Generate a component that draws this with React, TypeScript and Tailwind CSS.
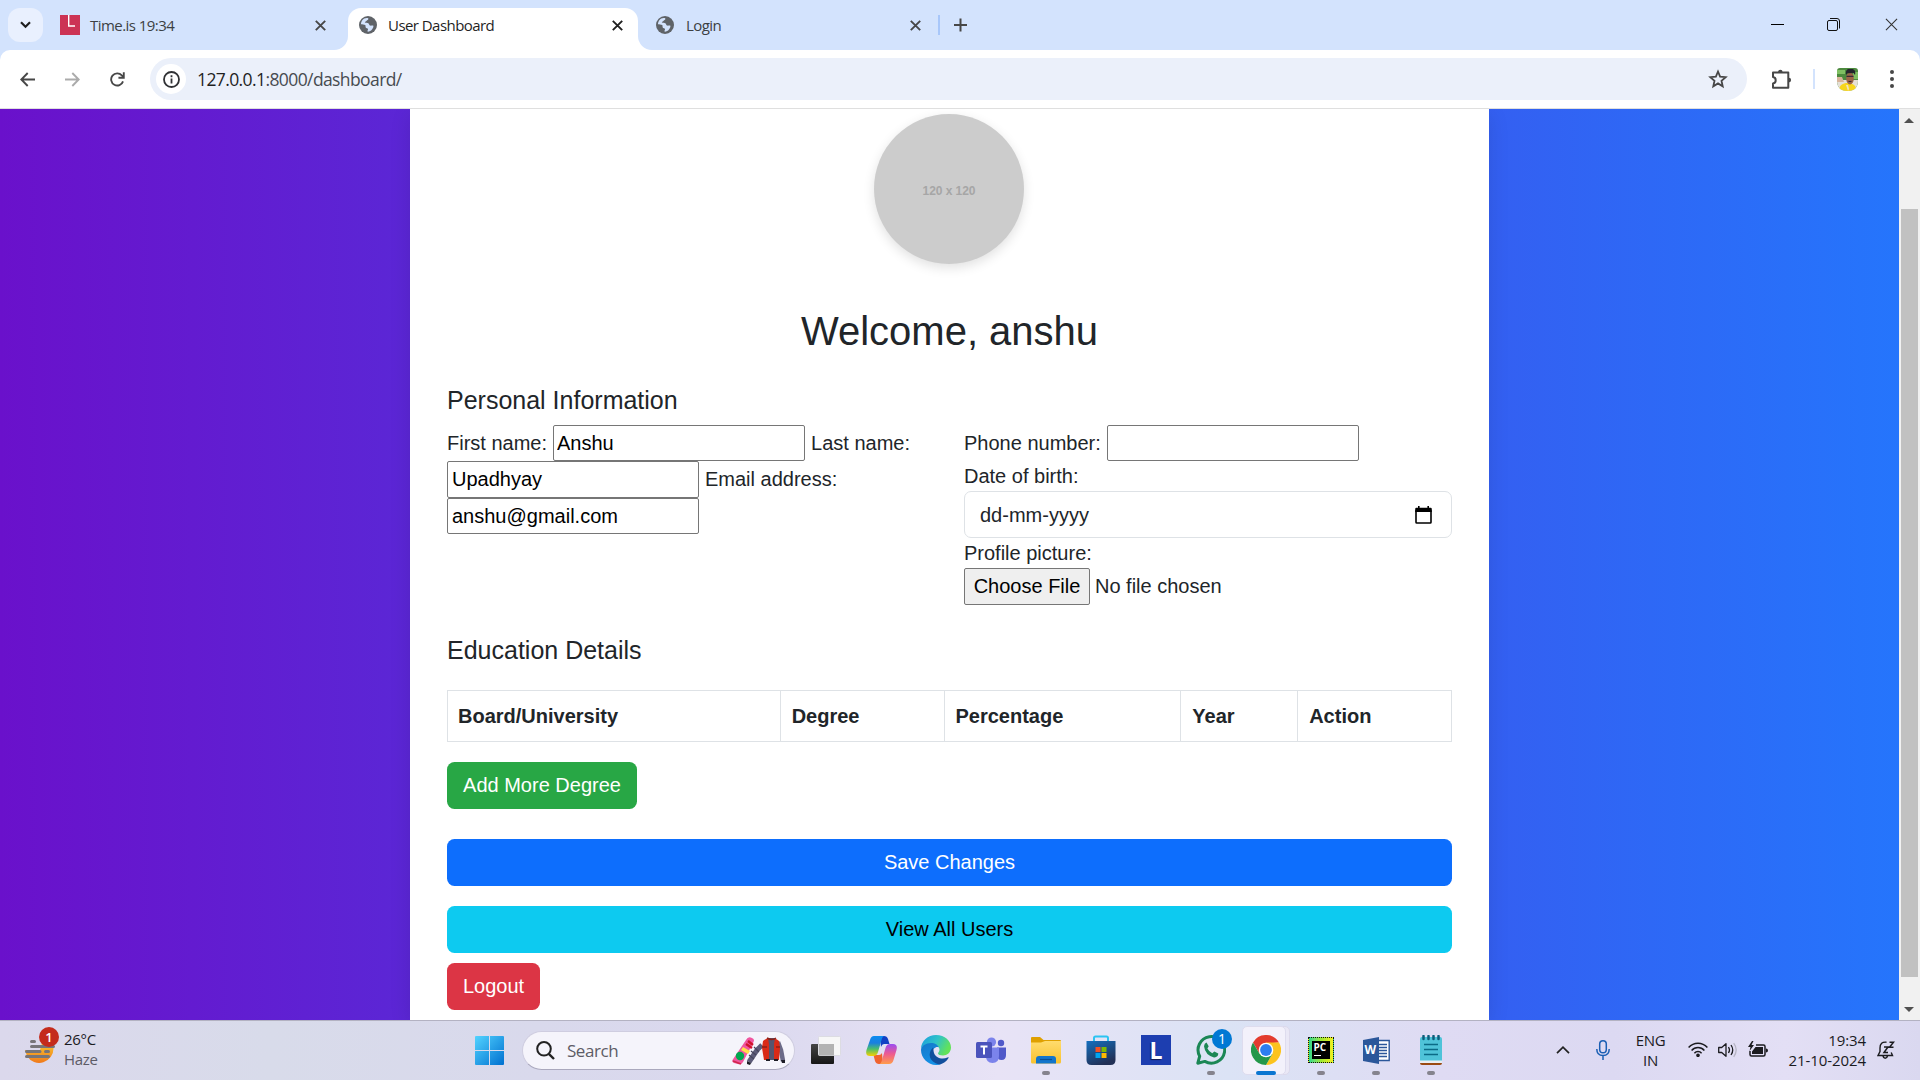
import React from "react";

const ui = "font-['Open_Sans','Noto_Sans',sans-serif]";

function Globe() {
  return (
    <svg width="18" height="18" viewBox="0 0 18 18">
      <circle cx="9" cy="9" r="9" fill="#5f6368" />
      <path
        d="M5.2 2.6C6.4 2 8 1.9 9.2 2.2c.6.9-.2 1.7-1.4 2.2-.3 1-1.600 1-2 1.900C6.500 7.200 8.500 6.600 9.600 7.400c.8.6.5 1.800 1.500 2.200 1.200.3 2.300-.4 3.300.2.2 1.400-.7 3.300-2.300 4.700-1.100.8-2.500 1.300-3.600 1.100-.2-1 .6-1.600.5-2.600-.3-1-1.800-.7-2.300-1.600-.4-1 .1-1.700-.5-2.300C5 8.300 3.300 8.700 1.900 8.300 2 5.800 3.400 3.600 5.200 2.600Z"
        fill="#d3e3fd"
      />
    </svg>
  );
}

function Cross({ color = "#474747", size = 11, w = 1.9 }: { color?: string; size?: number; w?: number }) {
  return (
    <svg width={size} height={size} viewBox="0 0 11 11" stroke={color} strokeWidth={w}>
      <path d="M.8.8l9.400 9.400M10.200.8L.8 10.200" fill="none" />
    </svg>
  );
}

function TabStrip() {
  return (
    <div className={`flex h-[50px] bg-[#d3e3fd] text-[15px] leading-[34px] tracking-[-0.550px] text-[#3c3f43] ${ui}`}>
      <div className="flex w-[348px] pl-2">
        <div className="mt-2 flex h-[34px] w-[35px] items-center justify-center rounded-[12px] bg-[#e9f0fe]">
          <svg width="11" height="8" viewBox="0 0 11 8" fill="none" stroke="#1f1f1f" strokeWidth="2.200">
            <path d="M1 1.300l4.500 4.500L10 1.300" />
          </svg>
        </div>
        <div className="mt-[15px] ml-[17px] h-5 w-5 bg-[#cc3355]">
          <svg width="20" height="20" fill="none" stroke="#fff" strokeWidth="1.400">
            <path d="M8.700 0v11H15" />
          </svg>
        </div>
        <span className="mt-[8px] ml-[10px] w-[225px]">Time.is 19:34</span>
        <div className="mt-[20px]">
          <Cross />
        </div>
        <div className="mt-auto ml-auto h-[14px] w-[15px] shrink-0 bg-white">
          <div className="h-full w-full rounded-br-[14px] bg-[#d3e3fd]" />
        </div>
      </div>
      <div className="mt-2 flex h-[42px] w-[290px] rounded-t-[13px] bg-white pl-[11px] text-[#1f1f1f]">
        <div className="mt-2">
          <Globe />
        </div>
        <span className="ml-[11px] w-[224px]">User Dashboard</span>
        <div className="mt-[12px]">
          <Cross color="#1f1f1f" />
        </div>
      </div>
      <div className="flex w-[300px]">
        <div className="mt-auto h-[14px] w-[14px] bg-white">
          <div className="h-full w-full rounded-bl-[14px] bg-[#d3e3fd]" />
        </div>
        <div className="mt-4 ml-[4px]">
          <Globe />
        </div>
        <span className="mt-2 ml-[12px] w-[224px]">Login</span>
        <div className="mt-[20px]">
          <Cross />
        </div>
      </div>
      <div className="mt-[15px] h-5 w-[2px] bg-[#a8c7fa]" />
      <svg className="mt-[18px] ml-[14px]" width="13" height="14" stroke="#474747" strokeWidth="2">
        <path d="M6.500 .5v13M0 7h13" />
      </svg>
      <div className="mr-[22px] ml-auto flex pt-[18px]">
        <svg width="14" height="14" stroke="#000" strokeWidth="1">
          <path d="M0 6.500h13" />
        </svg>
        <svg className="ml-[42px]" width="14" height="14" fill="none" stroke="#111" strokeWidth="1">
          <rect x=".5" y="2.500" width="10" height="10" rx="1.500" />
          <path d="M3 .5h7q2.500 0 2.500 2.500v7.500" />
        </svg>
        <div className="ml-[44px]">
          <Cross color="#333" size={13} w={0.9} />
        </div>
      </div>
    </div>
  );
}

function Toolbar() {
  return (
    <div className="bg-[#d3e3fd]">
      <div className="flex h-[59px] items-center rounded-t-[10px] border-b border-[#dfdfdf] bg-white">
        <svg className="ml-[20px]" width="15" height="15" viewBox="0 0 15 15" fill="none" stroke="#474747" strokeWidth="1.900">
          <path d="M15 7.500H1.500M7.700 1L1.300 7.500l6.400 6.500" />
        </svg>
        <svg className="ml-[30px]" width="15" height="15" viewBox="0 0 15 15" fill="none" stroke="#ababab" strokeWidth="1.900">
          <path d="M0 7.500h13.500M7.300 1l6.400 6.500L7.300 14" />
        </svg>
        <svg className="ml-[30px]" width="15" height="15" viewBox="0 0 16 16" fill="none" stroke="#474747" strokeWidth="2">
          <path d="M13.900 10A6.500 6.500 0 1 1 12.600 3.600L15 5.800M14.700 .3v5.800H9" />
        </svg>
        <div className="ml-[25px] flex h-[42px] w-[1597px] items-center rounded-full bg-[#ebf0fa]">
          <div className="ml-[6px] flex h-[30px] w-[30px] items-center justify-center rounded-full bg-white">
            <svg width="17" height="17" fill="none" stroke="#303134" strokeWidth="1.800">
              <circle cx="8.500" cy="8.500" r="7.500" />
              <path d="M8.500 7.500v5M8.500 4.300v1.900" />
            </svg>
          </div>
          <span className={`ml-[11px] text-[17.500px] tracking-[-0.600px] text-[#474b50] ${ui}`}>
            <span className="text-[#1f1f1f]">127.0.0.1</span>:8000/dashboard/
          </span>
          <svg className="mr-[19px] ml-auto" width="20" height="20" viewBox="0 0 20 20" fill="none" stroke="#474747" strokeWidth="1.800">
            <path d="M10 2.500l2.100 5.100 5.600.5-4.200 3.700 1.200 5.500L10 14.400l-4.700 2.900 1.200-5.500L2.300 8.100l5.600-.5z" />
          </svg>
        </div>
        <svg className="ml-[24px]" width="21" height="21" viewBox="0 0 21 21">
          <path
            d="M2 3.500h15.300v15.300H2v-4.300c3.600-.4 3.600-6.100 0-6.500z"
            fill="none"
            stroke="#474747"
            strokeWidth="2"
            strokeLinejoin="round"
          />
          <path d="M7 3a2.300 2.300 0 0 1 4.600 0zM17.800 8.800a2.300 2.300 0 0 1 0 4.600z" fill="#474747" />
        </svg>
        <div className="ml-[21px] h-5 w-[2px] bg-[#d3e3fd]" />
        <svg className="ml-[22px]" width="21" height="23" viewBox="0 0 21 23">
          <clipPath id="face">
            <path d="M3 0h15q3 0 3 3v9q0 11-10.500 11T0 12V3q0-3 3-3z" />
          </clipPath>
          <g clipPath="url(#face)">
            <path fill="#4c8a3e" d="M0 0h21v23H0z" />
            <path fill="#7fbf62" d="M0 2h8v4H0zM16 4h5v7h-5z" />
            <path fill="#e6e0d6" d="M0 12h21v11H0z" />
            <path fill="#d8b49a" d="M0 9h5l2 5H0z" />
            <path fill="#f7d51d" d="M2 23c0-6 4-8 8.500-8s9 2 9 8z" />
            <ellipse cx="13" cy="10.500" rx="3.800" ry="6" fill="#9c6548" />
            <path fill="#23242c" d="M9 7c-.5-5 1-6.500 4.500-6 4-.5 5.500 2 4.500 6l-1.500-2-6 .2z" />
            <path fill="#3a2a38" d="M9.500 7.800h7v1.300h-7zM11.500 13h3v.9h-3z" />
            <path fill="#f3e3c0" d="M9 17l2 0 1 4-1 2z" />
          </g>
        </svg>
        <svg className="ml-[31px]" width="6" height="20" fill="#474747">
          <circle cx="3" cy="3" r="2" />
          <circle cx="3" cy="10" r="2" />
          <circle cx="3" cy="17" r="2" />
        </svg>
      </div>
    </div>
  );
}

const field = "w-[252px] rounded-[2px] border border-[#767676] bg-white px-[4px] text-black outline-none";

const columns = [
  ["Board/University", "w-[333px] pl-[10px]"],
  ["Degree", "w-[164px] pl-[11px]"],
  ["Percentage", "w-[237px] pl-[11px]"],
  ["Year", "w-[117px] pl-[11px]"],
  ["Action", "w-[154px] pl-[11px]"],
];

function Dashboard() {
  return (
    <div className="flex h-[911px] overflow-hidden">
      <div className="flex w-[1899px] bg-[linear-gradient(90deg,#6a11cb,#2575fc)]">
        <main className="ml-[410px] flex w-[1079px] flex-col bg-white px-[37px] pt-[5px] font-['Liberation_Sans',Arial,sans-serif] text-[20px] leading-[30px] text-[#212529] shadow-[0_5px_20px_rgba(0,0,0,0.1)]">
          <div className="mr-px flex h-[150px] w-[150px] shrink-0 items-center justify-center self-center rounded-full bg-[#ccc] pt-[4px] text-[12px] font-bold tracking-[-0.050px] text-[#a6a6a6] shadow-[0_4px_12px_rgba(0,0,0,0.12)]">
            120 x 120
          </div>
          <h2 className="mt-[43px] text-center text-[40px] leading-[48px]">Welcome, anshu</h2>
          <h5 className="mt-[30px] text-[25px] leading-[30px]">Personal Information</h5>
          <div className="mt-[10px] flex h-[180px] shrink-0">
            <div className="flex w-[517px] flex-col">
              <div className="flex h-[36px] items-center">
                <label>First name:</label>
                <input className={`ml-[6px] h-[36px] pl-[3px] ${field}`} defaultValue="Anshu" />
                <label className="ml-[6px]">Last name:</label>
              </div>
              <div className="flex h-[37px] items-start">
                <input className={`h-[37px] pb-px ${field}`} defaultValue="Upadhyay" />
                <label className="mt-[3px] ml-[6px]">Email address:</label>
              </div>
              <div className="flex h-[36px] items-center">
                <input className={`h-[36px] ${field}`} defaultValue="anshu@gmail.com" />
              </div>
            </div>
            <div className="flex w-[488px] flex-col">
              <div className="flex h-[36px] items-center">
                <label>Phone number:</label>
                <input className={`ml-[6px] h-[36px] ${field}`} />
              </div>
              <label>Date of birth:</label>
              <div className="flex h-[47px] items-center justify-between rounded-[7px] border border-[#dee2e6] pr-[19px] pl-[15px]">
                <span>dd-mm-yyyy</span>
                <svg width="17" height="18" viewBox="0 0 17 18">
                  <path d="M1 5h15v11.200q0 .8-.8.8H1.800q-.8 0-.8-.8z" fill="none" stroke="#000" strokeWidth="1.600" />
                  <path d="M.2 3q0-1.200 1.200-1.200h14.200q1.200 0 1.200 1.200v3H.2zM3 0h1.600v2H3zM12.400 0h1.600v2h-1.600z" />
                </svg>
              </div>
              <label>Profile picture:</label>
              <div className="flex h-[37px] items-start">
                <button className="h-[37px] w-[126px] rounded-[2px] border border-[#767676] bg-[#efefef] pb-[2px] whitespace-nowrap text-black">
                  Choose File
                </button>
                <span className="mt-[3px] ml-[5px]">No file chosen</span>
              </div>
            </div>
          </div>
          <h5 className="mt-[30px] text-[25px] leading-[30px]">Education Details</h5>
          <div className="mt-[25px] flex h-[52px] shrink-0 border border-l-0 border-[#dee2e6] font-bold">
            {columns.map(([name, width]) => (
              <div key={name} className={`flex items-center border-l border-[#dee2e6] ${width}`}>
                {name}
              </div>
            ))}
          </div>
          <button className="mt-[20px] h-[47px] w-[190px] shrink-0 rounded-[7.500px] bg-[#28a745] pb-[2px] text-white">Add More Degree</button>
          <button className="mt-[30px] h-[47px] shrink-0 rounded-[7.500px] bg-[#0d6efd] pb-[2px] text-white">Save Changes</button>
          <button className="mt-[20px] h-[47px] shrink-0 rounded-[7.500px] bg-[#0dcaf0] pb-[2px] text-black">View All Users</button>
          <button className="mt-[10px] h-[47px] w-[93px] shrink-0 rounded-[7.500px] bg-[#dc3545] pb-[2px] text-white">Logout</button>
        </main>
      </div>
      <div className="flex w-[21px] flex-col items-center bg-[#f1f1f1]">
        <svg className="mt-[9px] mr-px" width="10" height="5" fill="#505050">
          <path d="M0 5L5 0l5 5z" />
        </svg>
        <div className="mt-[86px] h-[768px] w-[17px] bg-[#c1c1c1]" />
        <svg className="mt-[30px] mr-px" width="10" height="5" fill="#505050">
          <path d="M0 0h10L5 5z" />
        </svg>
      </div>
    </div>
  );
}

function TaskIcon({ children, dot = false }: { children: React.ReactNode; dot?: boolean }) {
  return (
    <div className="relative flex h-[58px] w-[55px] items-center justify-center">
      {children}
      {dot && <div className="absolute bottom-[4px] left-[23.500px] h-1 w-2 rounded-full bg-[#85838d]" />}
    </div>
  );
}

function Taskbar() {
  return (
    <div
      className={`flex h-[60px] border-t border-[#b3b2c2] bg-[linear-gradient(90deg,#dbd8ec_0%,#d8dbea_14%,#d9d9ec_28%,#dad8ee_38%,#e8e3f6_52%,#dbe3f5_64%,#dfdbf3_75%,#dcd9f2_84%,#e3dff5_93%,#dad8f0_100%)] text-[15px] leading-[20px] text-[#1b1b1f] ${ui}`}
    >
      <div className="flex w-[475px] pl-[25px]">
        <div className="relative mt-[6px] h-[36px] w-[34px]">
          <svg width="34" height="36" viewBox="0 0 34 36">
            <defs>
              <linearGradient id="sun" x2="0" y2="1">
                <stop stopColor="#f9c62e" />
                <stop offset="1" stopColor="#f07a1c" />
              </linearGradient>
            </defs>
            <path d="M0 23h15l2-7h11.500v5A14.300 14.300 0 0 1 2 29z" fill="url(#sun)" />
            <path stroke="#777579" strokeWidth="3" strokeLinecap="round" d="M6.500 14.500h3M6.500 19.500h22M1.500 24.500H15M20.500 24.500h3M1.500 29.500h22" />
          </svg>
          <div className="absolute top-0 left-[14px] flex h-5 w-5 items-center justify-center rounded-full bg-[#c42b1c] text-[13px] font-semibold text-white">
            1
          </div>
        </div>
        <div className="mt-[8px] ml-[5px] tracking-[-0.300px]">
          <div>26°C</div>
          <div className="text-[#5c5b66]">Haze</div>
        </div>
      </div>
      <svg className="mt-[15px]" width="29" height="29" viewBox="0 0 29 29">
        <defs>
          <linearGradient id="win" x2="1" y2="1">
            <stop stopColor="#52d3ff" />
            <stop offset="1" stopColor="#0070d0" />
          </linearGradient>
        </defs>
        <path fill="url(#win)" d="M1 0h13v14H0V1q0-1 1-1zM15 0h13q1 0 1 1v13H15zM0 15h14v14H1q-1 0-1-1zM15 15h14v13q0 1-1 1H15z" />
      </svg>
      <div className="mt-[10px] ml-[18px] flex h-[39px] w-[273px] items-center rounded-full border border-b-[#aaa8bd] border-[#cfcde0] bg-[#f5f4fb] pl-[13px]">
        <svg width="19" height="19" viewBox="0 0 19 19" fill="none" stroke="#222" strokeWidth="2">
          <circle cx="8" cy="7.800" r="6.800" />
          <path d="M12.800 12.800l5.200 5.200" strokeWidth="2.400" />
        </svg>
        <span className="ml-[12px] w-[165px] text-[17px] tracking-[-0.450px] text-[#5d5c66]">Search</span>
        <svg width="54" height="28" viewBox="0 0 54 28">
          <path d="M14 3q2-4 6-2 3 1 1.500 4L11 25q-1.500 3-5 2l-4-1q-2.500-1-1.500-3z" fill="#f0569f" />
          <path d="M16 4l5 4M14 7l6 4" stroke="#d0142c" strokeWidth="2.500" />
          <path d="M11 10l7 4-2 3-7-4z" fill="#ffe04a" />
          <circle cx="8" cy="19" r="4.200" fill="#00a650" />
          <path d="M1 24l8 3" stroke="#d0284a" strokeWidth="1.500" />
          <path d="M30 8l-5 5-4 6-4 6" stroke="#5c5b78" strokeWidth="5" fill="none" />
          <path d="M22 10l5 5M19 14l5 4M17 18l5 4" stroke="#45445c" strokeWidth="1.200" />
          <path d="M15 24l4 2-1 2-3-1z" fill="#1d1d26" />
          <path d="M46 5l3 8 2 11" stroke="#6c6b88" strokeWidth="4.500" fill="none" />
          <path d="M49 23h4v3h-3z" fill="#1d1d26" />
          <path d="M31 4q3-3 8-3t8 3l1 7-1 12H32l-2-12z" fill="#d92a17" />
          <path d="M36 1h7l-1 6v16h-5V7z" fill="#55546e" />
          <path d="M30 10h5M44 10h4M35 1q5 3 9 0" stroke="#8d2018" strokeWidth="1.500" fill="none" />
          <path d="M34 22h4v2h-4zM42 22h4v2h-4z" fill="#1d1d26" />
        </svg>
      </div>
      <div className="ml-[3.500px] flex">
        <TaskIcon>
          <svg width="30" height="28" viewBox="0 0 30 28">
            <defs>
              <linearGradient id="tv" x2="0" y2="1">
                <stop stopColor="#444" />
                <stop offset="1" stopColor="#161616" />
              </linearGradient>
            </defs>
            <rect y="8" width="23" height="20" rx="1" fill="url(#tv)" />
            <rect x="7.500" y=".5" width="22" height="19" rx="1" fill="#f7f7f7" stroke="#dcdce2" />
            <path fill="#b3b3b3" d="M8 8h15v11.500H8z" />
          </svg>
        </TaskIcon>
        <TaskIcon>
          <svg width="31" height="28" viewBox="0 0 31 28">
            <defs>
              <linearGradient id="cpA" x2="0" y2="1">
                <stop stopColor="#0b8cf0" />
                <stop offset=".35" stopColor="#1a7fe0" />
                <stop offset=".65" stopColor="#4bbf6b" />
                <stop offset="1" stopColor="#f7d000" />
              </linearGradient>
              <linearGradient id="cpB" x2="0" y2="1">
                <stop stopColor="#9a4cf2" />
                <stop offset=".5" stopColor="#ee5b90" />
                <stop offset="1" stopColor="#ff9d4a" />
              </linearGradient>
            </defs>
            <path d="M14 0h4q3 0 4 3l1.500 5H18q-2 0-3 3z" fill="#1240c4" />
            <path d="M17 28h-4q-3 0-4-3l-1.500-6H13q2 0 3-2z" fill="#f0632f" />
            <path d="M8 0h10.500q-2 0-3 4l-3.500 12q-1 4-5 4H4q-5 0-3.500-6L4 4q1-4 4-4z" fill="url(#cpA)" />
            <path d="M23 28H13q2 0 3-4l3.500-12q1-4 4.500-4h3q5 0 3.500 6L27.500 24q-1 4-4.500 4z" fill="url(#cpB)" />
          </svg>
        </TaskIcon>
        <TaskIcon>
          <svg width="30" height="30" viewBox="0 0 30 30">
            <defs>
              <linearGradient id="edA" x2="1" y2=".4">
                <stop stopColor="#1a9be0" />
                <stop offset=".55" stopColor="#2fc3c8" />
                <stop offset="1" stopColor="#62e25a" />
              </linearGradient>
              <linearGradient id="edB" x2=".4" y2="1">
                <stop stopColor="#1578c9" />
                <stop offset="1" stopColor="#1490e6" />
              </linearGradient>
            </defs>
            <path d="M0 14C0 6 7 0 15 0c9 0 15 6 15 12.500 0 5-4 8-8 8-3 0-5-1-5-2 0-1 1.500-1.500 1.500-4 0-3-3.500-5.500-7.500-5.500C5 9 0 12 0 14z" fill="url(#edA)" />
            <path d="M0 15c0-4 5-7 10-7 4 0 7 2 8 4.500-2-1.500-7 .5-7 6.500 0 5 4 9 9 10-1.500.7-3.500 1-5 1C7 30 0 23 0 15z" fill="url(#edB)" />
            <path d="M12 12.500C6 18 8 27 18 29.500c4-.5 8-3.500 9.500-6.500.5-1-.3-1-1-.6-5 2.500-12 .6-13.500-4.400-.6-2-.5-4-1-5.500z" fill="#124f9d" />
          </svg>
        </TaskIcon>
        <TaskIcon>
          <svg width="30" height="27" viewBox="0 0 30 27">
            <circle cx="15.500" cy="5" r="4.600" fill="#7b83eb" />
            <circle cx="25" cy="6" r="3.200" fill="#5059c9" />
            <path d="M21 10.500h9V18q0 5-4.500 5T21 18z" fill="#5059c9" />
            <path d="M10 10.500h13V19q0 7-6.500 7T10 19z" fill="#7b83eb" />
            <rect y="5" width="16" height="16" rx="1.500" fill="#4b53bc" />
            <path d="M4.500 9.500h7M8 9.500v8" stroke="#fff" strokeWidth="2" />
          </svg>
        </TaskIcon>
        <TaskIcon dot>
          <svg width="30" height="27" viewBox="0 0 30 27">
            <defs>
              <linearGradient id="fold" x2="0" y2="1">
                <stop stopColor="#ffdc6e" />
                <stop offset="1" stopColor="#f8c22f" />
              </linearGradient>
            </defs>
            <path d="M1 0h8l3.500 3H29q1 0 1 1v8H0V1q0-1 1-1z" fill="#dfa000" />
            <path d="M0 5.500h10L14 4h16v21q0 1.500-1.500 1.500h-27Q0 26.500 0 25z" fill="url(#fold)" />
            <path d="M5 26.500V22q0-3 3-3h14q3 0 3 3v4.500z" fill="#1275cb" />
            <path d="M9 22.500h12" stroke="#0a4f94" strokeWidth="1.200" />
          </svg>
        </TaskIcon>
        <TaskIcon>
          <svg width="30" height="30" viewBox="0 0 30 30">
            <defs>
              <linearGradient id="store" x2=".5" y2="1">
                <stop stopColor="#136fbe" />
                <stop offset="1" stopColor="#223056" />
              </linearGradient>
            </defs>
            <path d="M8 7V3q0-1.500 1.500-1.500h11Q22 1.500 22 3v4" fill="none" stroke="#2cc4f2" strokeWidth="2" />
            <path d="M.5 6h29v19q0 5-5 5h-19q-5 0-5-5z" fill="url(#store)" />
            <path fill="#f25022" d="M9.500 12h5v5h-5z" />
            <path fill="#7fba00" d="M15.500 12h5v5h-5z" />
            <path fill="#00a4ef" d="M9.500 18h5v5h-5z" />
            <path fill="#ffb900" d="M15.500 18h5v5h-5z" />
          </svg>
        </TaskIcon>
        <TaskIcon>
          <div className="flex h-[30px] w-[30px] items-center justify-center bg-[#1d3eb0] text-[23px] leading-[30px] font-bold text-white [text-shadow:-1px_1px_1px_#111a50]">
            L
          </div>
        </TaskIcon>
        <TaskIcon dot>
          <svg width="30" height="30" viewBox="0 0 30 30">
            <path d="M1.800 28.200l1.900-7A13.300 13.300 0 1 1 8.800 26.400z" fill="none" stroke="#1b8755" strokeWidth="3" strokeLinejoin="round" />
            <path
              d="M10.500 7.500l2.200 3.800-1.300 2.200q1.600 3.200 4.900 4.700l2-1.600 4 2q-.2 4-4.300 3.800Q9.200 20.300 8 11.300q.3-3 2.500-3.800z"
              fill="#1b8755"
            />
          </svg>
          <div className="absolute top-[8px] left-[28.500px] flex h-[20px] w-[20px] items-center justify-center rounded-full bg-[#0078d4] text-[14px] text-white">
            1
          </div>
        </TaskIcon>
        <div className="relative flex h-[58px] w-[55px] items-center justify-center">
          <div className="absolute top-[5px] left-[6.500px] h-[49px] w-[45px] rounded-[5px] border border-[#dcd9ec] bg-[#eae8f6]" />
          <div className="absolute top-[5px] left-[3.500px] h-[49px] w-[44px] rounded-[5px] border border-[#dedcee] bg-[#f3f1fb]" />
          <svg className="relative" width="30" height="30" viewBox="0 0 30 30">
            <circle cx="15" cy="15" r="15" fill="#fff" />
            <path d="M2 7.500A15 15 0 0 1 28 7.500L15 8.500 8.500 18.700z" fill="#e33b2e" />
            <path d="M28 7.500A15 15 0 0 1 15 30L21.500 18.700 15 7.500z" fill="#fcc31e" />
            <path d="M15 30A15 15 0 0 1 2 7.500L8.500 18.700 21.500 18.700z" fill="#24974a" />
            <circle cx="15" cy="15" r="7.300" fill="#fff" />
            <circle cx="15" cy="15" r="5.900" fill="#2d7ef0" />
          </svg>
          <div className="absolute bottom-[4px] left-[17.500px] h-1 w-5 rounded-full bg-[#0b76d1]" />
        </div>
        <TaskIcon dot>
          <div className="flex h-[26px] w-[26px] items-center justify-center border border-dotted border-[#111] bg-linear-to-r from-[#21d789] via-[#9be832] to-[#f2f01e]">
            <div className="flex h-[18px] w-[18px] flex-col bg-black pt-px pl-[1.500px] text-[10px] leading-[11px] font-bold text-white">
              PC
              <div className="mt-[2px] h-px w-[7px] bg-white" />
            </div>
          </div>
        </TaskIcon>
        <TaskIcon dot>
          <div className="relative flex h-[27px] w-[27px] items-center">
            <svg width="27" height="27" viewBox="0 0 27 27">
              <path d="M14 3.500h12.200v20H14z" fill="#fff" stroke="#2b579a" strokeWidth="1.400" />
              <path d="M16 7.500h8M16 10.500h8M16 13.500h8M16 16.500h8M16 19.500h8" stroke="#2b579a" strokeWidth="1.500" />
              <path d="M0 3L16 0v27L0 24z" fill="#2b579a" />
            </svg>
            <span className="absolute left-[2px] text-[12px] font-bold text-white">W</span>
          </div>
        </TaskIcon>
        <TaskIcon dot>
          <svg width="22" height="30" viewBox="0 0 22 30">
            <path d="M0 26h22v2q0 2-2 2H2q-2 0-2-2z" fill="#9a4a12" />
            <path d="M0 4q0-2 2-2h18q2 0 2 2v23H0z" fill="#4fc3d9" />
            <path d="M0 25.500h22V28H0z" fill="#e9eef2" />
            <path d="M4 9.500h14M4 14.500h14M4 19.500h14" stroke="#0b6a86" strokeWidth="1.700" />
            <path d="M3.500 1v3M8.500 1v3M13.500 1v3M18.500 1v3" stroke="#0c5f7b" strokeWidth="2.500" strokeLinecap="round" />
          </svg>
        </TaskIcon>
      </div>
      <div className="mr-[25px] ml-auto flex items-center pb-[2px]">
        <svg width="14" height="8" viewBox="0 0 14 8" fill="none" stroke="#222" strokeWidth="1.700">
          <path d="M1 7.200l6-6 6 6" />
        </svg>
        <svg className="ml-[26px]" width="14" height="20" viewBox="0 0 14 20" fill="none" stroke="#1a5fb4" strokeWidth="1.500">
          <rect x="3.700" y=".8" width="6.600" height="12" rx="3.300" />
          <path d="M.8 9q0 6.500 6.200 6.500T13.200 9M7 15.500V20" />
        </svg>
        <div className="ml-[24px] w-[33px] text-center tracking-[-0.300px]">
          <div>ENG</div>
          <div>IN</div>
        </div>
        <svg className="ml-[21px]" width="20" height="15" viewBox="0 0 20 15" fill="none" stroke="#1b1b1f" strokeWidth="1.500">
          <path d="M.6 5.600Q4.500 1.200 10 1.200t9.400 4.400M3.600 8.600Q6.200 5.600 10 5.600t6.400 3M6.400 11.300Q7.900 9.600 10 9.600t3.600 1.700" />
          <circle cx="10" cy="13.300" r="1.100" fill="#1b1b1f" />
        </svg>
        <svg className="ml-[10px]" width="20" height="16" viewBox="0 0 20 16" fill="none" stroke="#1b1b1f" strokeWidth="1.300">
          <path d="M.7 5.500h3L8 1.700v12.600l-4.300-3.800h-3z" strokeLinejoin="round" />
          <path d="M10.500 5q2 3 0 6M13 3q3.500 5 0 10" />
          <path d="M15.700 1.200q5 6.800 0 13.600" stroke="#b7b5c4" />
        </svg>
        <svg className="ml-[10px]" width="20" height="17" viewBox="0 0 20 17">
          <path d="M8 4h7.500q1.500 0 1.500 1.500v8q0 1.500-1.500 1.500h-12Q2 15 2 13.500V10" fill="none" stroke="#1b1b1f" strokeWidth="1.500" />
          <path d="M7.500 6H15v7H4v-2.500zM18 7.500q2 0 2 2t-2 2zM4 0L0 6h2.500L1.500 10 6 4H3.500L5.500 0z" fill="#1b1b1f" />
        </svg>
        <div className="ml-[19px] w-[79px] text-right tracking-[-0.080px] whitespace-nowrap">
          <div>19:34</div>
          <div>21-10-2024</div>
        </div>
        <svg className="ml-[11px]" width="18" height="18" viewBox="0 0 18 18" fill="none" stroke="#1b1b1f" strokeWidth="1.400">
          <path d="M9.500 1.200Q3 .5 3 7v3.500L1 14.500h14.500l-1.300-3M6 15q.5 2.300 2.200 2.300T10.500 15" />
          <path d="M7 6h4l-4 5.500h4M12.500 1.200h4l-4 5h4" strokeWidth="1.500" />
        </svg>
      </div>
    </div>
  );
}

export default function App() {
  return (
    <div className="flex h-[1080px] w-[1920px] flex-col overflow-hidden">
      <TabStrip />
      <Toolbar />
      <Dashboard />
      <Taskbar />
    </div>
  );
}
